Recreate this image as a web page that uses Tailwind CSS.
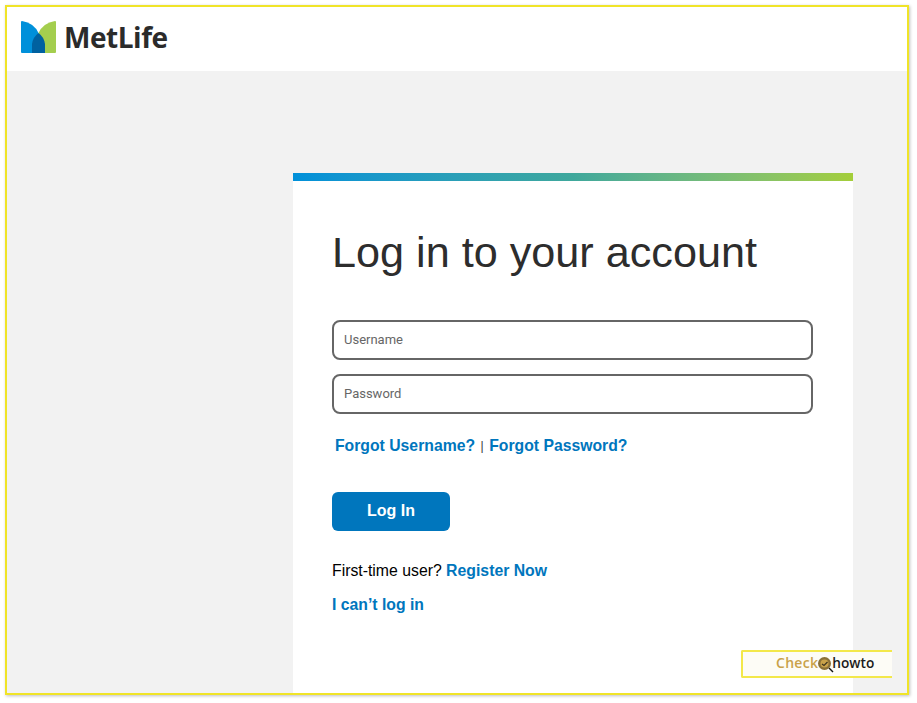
<!DOCTYPE html>
<html lang="en">
<head>
    <meta charset="UTF-8">
    <title>MetLife Log In</title>
    <script src="https://cdn.jsdelivr.net/npm/@tailwindcss/browser@4"></script>
</head>
<body class="bg-white font-['Liberation_Sans',Arial,sans-serif]">
    <div class="relative w-[917px] h-[703px] overflow-hidden">
        <!-- Yellow screenshot frame -->
        <div class="flex flex-col w-[904px] h-[690px] mt-[5px] ml-[5px] border-2 border-[#f0e428] shadow-[1px_1px_3px_rgba(0,0,0,0.25)] overflow-hidden">
            <!-- Header -->
            <header class="flex items-center gap-[8px] h-[64px] pl-[14px] pb-[4px] bg-white shrink-0">
                <svg width="35" height="32" viewBox="0 0 35 32">
                    <path d="M0 1 Q0 0 1 0 Q13 2 17.5 12 L17.5 32 L1 32 Q0 32 0 31 Z" fill="#0090da"/>
                    <path d="M34 0 Q35 0 35 1 L35 31 Q35 32 34 32 L17.5 32 L17.5 12 Q22 2 34 0 Z" fill="#a4ce4e"/>
                    <path d="M11 32 L11 23 Q12 16 17.5 12 Q23 16 24 23 L24 32 Z" fill="#0061a0"/>
                </svg>
                <span class="font-['Open_Sans',sans-serif] font-bold text-[28px] leading-none tracking-[-0.45px] text-[#2b2b2b]">MetLife</span>
            </header>

            <!-- Main -->
            <main class="flex-1 bg-[#f2f2f2] pt-[102px] pl-[286px]">
                <div class="w-[560px] h-[520px] bg-white">
                    <div class="h-[8px] bg-gradient-to-r from-[#0090da] via-[#3fa89c] to-[#a4ce39]"></div>
                    <div class="pt-[46px] px-[39px]">
                        <h1 class="text-[43.2px] leading-[50px] text-[#2d2d2d]">Log in to your account</h1>
                        <div class="flex flex-col gap-[14px] mt-[43px]">
                            <input type="text" placeholder="Username" class="w-[481px] h-[40px] pl-[10px] pb-[2px] border-2 border-[#666666] rounded-[8px] bg-white text-[13px] font-['Roboto',sans-serif] placeholder:text-[#666666]">
                            <input type="password" placeholder="Password" class="w-[481px] h-[40px] pl-[10px] pb-[2px] border-2 border-[#666666] rounded-[8px] bg-white text-[13px] font-['Roboto',sans-serif] placeholder:text-[#666666]">
                        </div>
                        <div class="flex items-center mt-[21px] pl-[3px] text-[15.75px] leading-[22px] font-bold text-[#0076bd]">
                            <a href="#">Forgot Username?</a>
                            <span class="mx-[5.5px] font-normal text-[12px] text-[#333333]">|</span>
                            <a href="#">Forgot Password?</a>
                        </div>
                        <button class="block w-[118px] h-[39px] mt-[35px] pb-[2px] bg-[#0076bd] rounded-[6px] text-white text-[16px] font-bold">Log In</button>
                        <p class="mt-[30px] text-[15.8px] leading-[20px] text-black">First-time user? <a href="#" class="font-bold text-[#0076bd]">Register Now</a></p>
                        <p class="mt-[14px] text-[15.75px] leading-[20px]"><a href="#" class="font-bold text-[#0076bd]">I can’t log in</a></p>
                    </div>
                </div>
            </main>
        </div>

        <!-- Watermark badge -->
        <div class="absolute left-[741px] top-[650px] flex items-center w-[151px] h-[28px] pl-[33px] pb-[3px] bg-[#fdfcf6] border-2 border-r-0 border-[#f3e84a] rounded-l-[2px] font-['Open_Sans',sans-serif] text-[14px] leading-none">
            <span class="text-[#c9a24a] font-semibold tracking-[0.3px]">Check</span>
            <svg width="17" height="17" viewBox="0 0 17 17" class="shrink-0 mt-[3px] -ml-[1px]">
                <circle cx="7.5" cy="7.5" r="6.5" fill="#8a7038"/>
                <circle cx="7.5" cy="7.5" r="4" fill="#c9a24a"/>
                <path d="M5 8l2 1.5L10.5 6" fill="none" stroke="#3d3420" stroke-width="1.2"/>
                <path d="M12 12l4 4" stroke="#111111" stroke-width="1.5"/>
            </svg>
            <span class="text-[#1c1c1c] font-semibold text-[13.7px] -ml-[2px]">howto</span>
        </div>
    </div>
</body>
</html>
